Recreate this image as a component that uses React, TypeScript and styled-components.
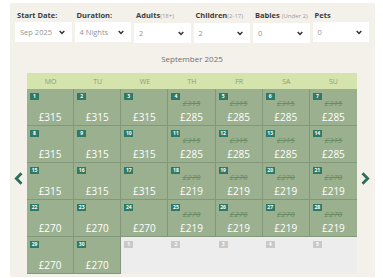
import React from 'react'
import styled, { createGlobalStyle } from 'styled-components'

const GlobalStyle = createGlobalStyle`
  body {
    margin: 0;
    background: #ffffff;
    font-family: "Open Sans", "Liberation Sans", sans-serif;
  }
`

type Day = { day: number; price?: number; old?: number; outside?: boolean }

const filters = [
  { label: 'Start Date:', note: '', value: 'Sep 2025' },
  { label: 'Duration:', note: '', value: '4 Nights' },
  { label: 'Adults', note: '(18+)', value: '2' },
  { label: 'Children', note: '(2-17)', value: '2' },
  { label: 'Babies ', note: '(Under 2)', value: '0' },
  { label: 'Pets', note: '', value: '0' },
]

const weekDays = ['MO', 'TU', 'WE', 'TH', 'FR', 'SA', 'SU']

// Thu-Sun carry an offer; first half of the month at 315, second at 270
const buildDays = (): Day[] => {
  const days: Day[] = []
  for (let d = 1; d <= 30; d++) {
    const offer = (d - 1) % 7 >= 3
    if (d <= 17) {
      days.push(offer ? { day: d, price: 285, old: 315 } : { day: d, price: 315 })
    } else {
      days.push(offer ? { day: d, price: 219, old: 270 } : { day: d, price: 270 })
    }
  }
  for (let d = 1; d <= 5; d++) days.push({ day: d, outside: true })
  return days
}

const Chevron = ({ dir }: { dir: 'left' | 'right' }) => (
  <svg width="9" height="13" viewBox="0 0 9 13">
    <path
      d={dir === 'left' ? 'M7.5 1.2 L2.3 6.5 L7.5 11.8' : 'M1.5 1.2 L6.7 6.5 L1.5 11.8'}
      fill="none"
      stroke="#2b6e5d"
      strokeWidth="2.8"
    />
  </svg>
)

const App = () => {
  const days = buildDays()

  return (
    <>
      <GlobalStyle />
      <Panel>
        <Filters>
          {filters.map(f => (
            <Field key={f.label}>
              <Label>
                {f.label}
                {f.note && <Note>{f.note}</Note>}
              </Label>
              <Select>
                <span>{f.value}</span>
                <svg width="6" height="5" viewBox="0 0 6 5">
                  <path d="M0.7 0.9 L3 3.4 L5.3 0.9" fill="none" stroke="#333" strokeWidth="1.5" />
                </svg>
              </Select>
            </Field>
          ))}
        </Filters>

        <MonthTitle>September 2025</MonthTitle>

        <CalendarRow>
          <ArrowButton $side="left"><Chevron dir="left" /></ArrowButton>
          <Grid>
            {weekDays.map(w => <HeadCell key={w}>{w}</HeadCell>)}
            {days.map((d, i) => (
              <DayCell key={i} $outside={d.outside} $lastCol={i % 7 === 6}>
                <Badge $outside={d.outside}>{d.day}</Badge>
                {d.old && <OldPrice>£{d.old}</OldPrice>}
                {d.price && <Price>£{d.price}</Price>}
              </DayCell>
            ))}
          </Grid>
          <ArrowButton $side="right"><Chevron dir="right" /></ArrowButton>
        </CalendarRow>
      </Panel>
    </>
  )
}

const Panel = styled.div`
  margin: 3px 8px 0 10px;
  height: 274px;
  background: #f4f0ea;
  padding: 7px 6px 0 5px;
  box-sizing: border-box;
`

const Filters = styled.div`
  display: grid;
  grid-template-columns: repeat(6, 1fr);
  column-gap: 3px;
`

const Field = styled.div`
  display: flex;
  flex-direction: column;
  gap: 1px;
`

const Label = styled.div`
  font-size: 7.5px;
  font-weight: 700;
  color: #3d3d3d;
  line-height: 11px;
  padding-left: 2px;
  white-space: nowrap;
`

const Note = styled.span`
  font-weight: 400;
  font-size: 6px;
  color: #9a9a9a;
`

const Select = styled.div`
  height: 20px;
  background: #ffffff;
  display: flex;
  align-items: center;
  justify-content: space-between;
  padding: 0 7px 0 5px;
  font-size: 7.5px;
  color: #959595;
`

const MonthTitle = styled.div`
  text-align: center;
  font-size: 8px;
  color: #707070;
  margin-top: 10px;
  height: 20px;
  line-height: 11px;
`

const CalendarRow = styled.div`
  display: flex;
  align-items: center;
`

const ArrowButton = styled.div<{ $side: 'left' | 'right' }>`
  width: 13px;
  display: flex;
  justify-content: ${p => (p.$side === 'left' ? 'flex-start' : 'flex-end')};
  margin-top: 10px;
  margin-${p => p.$side}: -1px;
`

const Grid = styled.div`
  flex: 1;
  display: grid;
  grid-template-columns: repeat(7, 1fr);
  grid-template-rows: 16px;
  grid-auto-rows: 37px;
`

const HeadCell = styled.div`
  background: #d5e3ad;
  color: #8d9c78;
  font-size: 7px;
  display: flex;
  align-items: center;
  justify-content: center;
`

const DayCell = styled.div<{ $outside?: boolean; $lastCol?: boolean }>`
  position: relative;
  background: ${p => (p.$outside ? '#ededed' : '#9bb08f')};
  border-right: ${p => (p.$lastCol ? 'none' : p.$outside ? '1px solid #ededed' : '1px solid #83977a')};
  border-bottom: 1px solid ${p => (p.$outside ? '#ededed' : '#83977a')};
  display: flex;
  flex-direction: column;
  align-items: center;
  justify-content: flex-end;
  padding-bottom: 1px;
  box-sizing: border-box;
`

const Badge = styled.div<{ $outside?: boolean }>`
  position: absolute;
  top: 4px;
  left: 3px;
  min-width: 9px;
  height: 7px;
  padding: 0 1px;
  box-sizing: border-box;
  background: ${p => (p.$outside ? '#c9c9c9' : '#2f7a66')};
  color: #ffffff;
  font-size: 5px;
  font-weight: 700;
  line-height: 7px;
  text-align: center;
`

const OldPrice = styled.div`
  font-size: 8px;
  font-style: italic;
  text-decoration: line-through;
  color: #6a8b63;
  line-height: 10px;
  margin-bottom: 2px;
`

const Price = styled.div`
  font-size: 10px;
  color: #ffffff;
  line-height: 14px;
`

export default App
